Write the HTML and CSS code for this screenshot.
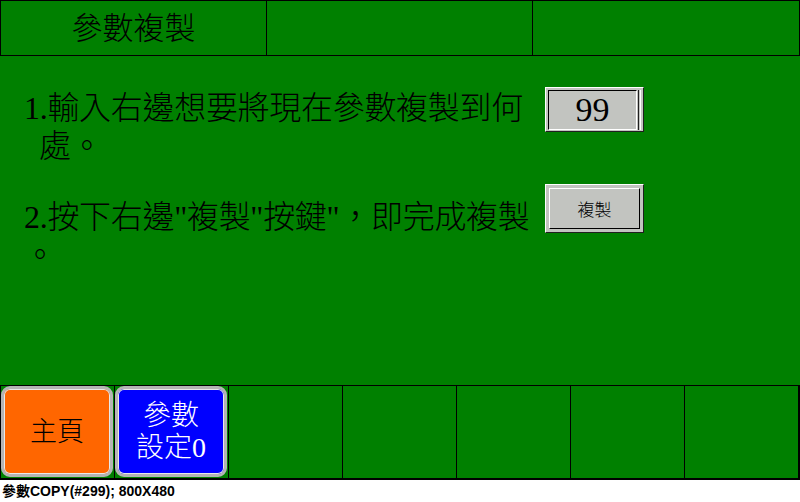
FILE: index.html
```html
<!DOCTYPE html>
<html>
<head>
<meta charset="utf-8">
<link rel="stylesheet" href="styles.css">
</head>
<body>
<div class="screen">
  <div class="topbar">
    <div class="tcell title">參數複製</div>
    <div class="tcell"></div>
    <div class="tcell last"></div>
  </div>
  <div class="content">
    <div class="row row1">
      <div class="text t1">1.輸入右邊想要將現在參數複製到何<br><span class="indent">處。</span></div>
      <div class="field">
        <div class="field-box">99</div>
        <div class="field-bar"></div>
      </div>
    </div>
    <div class="row row2">
      <div class="text t2">2.按下右邊"複製"按鍵"，即完成複製<br>。</div>
      <div class="btn-copy"><div class="btn-copy-in">複製</div></div>
    </div>
  </div>
  <div class="bottombar">
    <div class="bcell"><div class="key orange">主頁</div></div>
    <div class="bcell"><div class="key blue">參數<br>設定0</div></div>
    <div class="bcell"></div>
    <div class="bcell"></div>
    <div class="bcell"></div>
    <div class="bcell"></div>
    <div class="bcell"></div>
  </div>
</div>
<div class="status">參數COPY(#299); 800X480</div>
</body>
</html>
```
FILE: styles.css
```css
html, body {
  margin: 0;
  padding: 0;
  background: #ffffff;
}
body {
  width: 800px;
  height: 502px;
  overflow: hidden;
  font-family: "Liberation Serif", "Noto Sans CJK TC", serif;
  font-weight: 300;
}
.screen {
  width: 800px;
  height: 480px;
  background: #008000;
  display: flex;
  flex-direction: column;
  box-sizing: border-box;
}
.topbar {
  height: 56px;
  box-sizing: border-box;
  border: 1px solid #000;
  display: flex;
}
.tcell {
  width: 265px;
  border-right: 1px solid #000;
  display: flex;
  align-items: center;
  justify-content: center;
}
.tcell.last {
  flex: 1;
  border-right: none;
}
.title {
  font-size: 31px;
  color: #000;
  line-height: 1;
  padding-top: 1px;
}
.content {
  flex: 1;
  padding: 31px 0 0 24px;
}
.row {
  display: flex;
  align-items: flex-start;
}
.text {
  width: 521px;
  white-space: nowrap;
  font-size: 32px;
  line-height: 38px;
  color: #000;
  padding-top: 2px;
}
.t1 {
  letter-spacing: -0.3px;
}
.indent {
  padding-left: 15px;
}
.row2 {
  margin-top: 19px;
}
.t2 {
  padding-top: 14px;
  letter-spacing: -0.3px;
}
.field {
  width: 99px;
  height: 45px;
  box-sizing: border-box;
  background: #c2c4c0;
  border-top: 1px solid #fff;
  border-left: 1px solid #fff;
  border-right: 1px solid #202020;
  border-bottom: 1px solid #202020;
  display: flex;
  padding: 2px 2px 1px 2px;
  gap: 1px;
}
.field-box {
  width: 89px;
  box-sizing: border-box;
  border-top: 1px solid #000;
  border-left: 1px solid #000;
  border-right: 1px solid #fff;
  border-bottom: 1px solid #fff;
  font-family: "Liberation Serif", serif;
  font-size: 34px;
  line-height: 38px;
  text-align: center;
  color: #000;
}
.field-bar {
  width: 3px;
  box-sizing: border-box;
  border-left: 1px solid #202020;
  border-right: 1px solid #fff;
}
.btn-copy {
  width: 99px;
  height: 49px;
  box-sizing: border-box;
  background: #c2c4c0;
  border-top: 1px solid #fff;
  border-left: 1px solid #fff;
  border-right: 1px solid #202020;
  border-bottom: 1px solid #202020;
  padding: 3px;
}
.btn-copy-in {
  height: 100%;
  box-sizing: border-box;
  border-top: 1px solid #fff;
  border-left: 1px solid #fff;
  border-right: 1px solid #000;
  border-bottom: 1px solid #000;
  display: flex;
  align-items: center;
  justify-content: center;
  font-family: "Noto Sans CJK TC", sans-serif;
  font-size: 17px;
  color: #000;
}
.bottombar {
  height: 95px;
  box-sizing: border-box;
  border-top: 1px solid #000;
  border-bottom: 2px solid #000;
  border-left: 1px solid #000;
  border-right: 2px solid #000;
  display: flex;
}
.bcell {
  width: 113px;
  border-right: 1px solid #000;
  padding: 0 0 1px 0;
  box-sizing: content-box;
}
.bcell:last-child {
  flex: 1;
  border-right: none;
}
.key {
  width: 112px;
  height: 91px;
  box-sizing: border-box;
  border: 3px solid #b4b4b4;
  border-radius: 9px;
  box-shadow: inset 0 0 0 1px #e8e8e8;
  display: flex;
  align-items: center;
  justify-content: center;
  text-align: center;
  font-family: "Liberation Serif", "Noto Sans CJK TC", serif;
}
.orange {
  background: #ff6600;
  color: #000;
  font-size: 27px;
  line-height: 1;
  padding-top: 2px;
}
.blue {
  background: #0000ff;
  color: #fff;
  font-size: 28px;
  line-height: 32px;
}
.status {
  height: 22px;
  padding-left: 2px;
  font-family: "Liberation Sans", "Noto Sans CJK TC", sans-serif;
  font-weight: 700;
  font-size: 14px;
  line-height: 22px;
  color: #000;
}
```
